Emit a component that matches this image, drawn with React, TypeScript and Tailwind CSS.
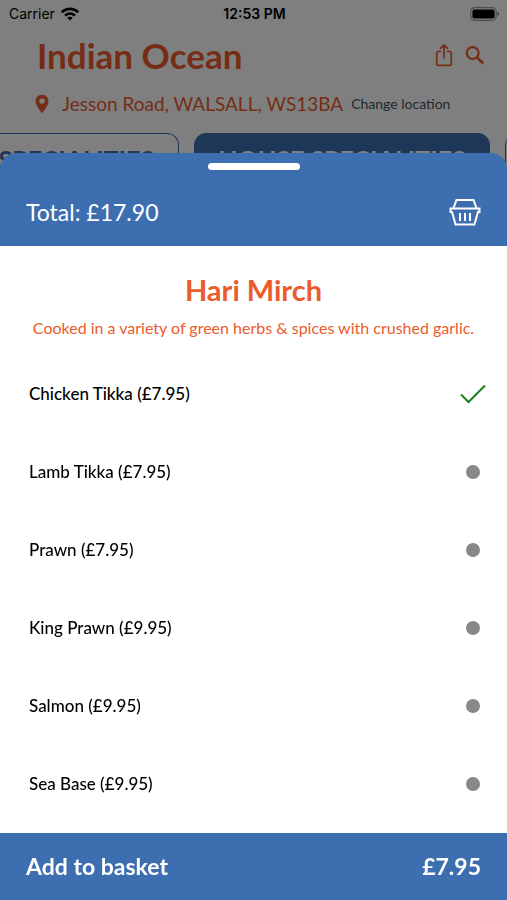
import { useState } from 'react';

interface Option {
  id: string;
  name: string;
  price: string;
}

const OPTIONS: Option[] = [
  { id: 'chicken-tikka', name: 'Chicken Tikka', price: '£7.95' },
  { id: 'lamb-tikka', name: 'Lamb Tikka', price: '£7.95' },
  { id: 'prawn', name: 'Prawn', price: '£7.95' },
  { id: 'king-prawn', name: 'King Prawn', price: '£9.95' },
  { id: 'salmon', name: 'Salmon', price: '£9.95' },
  { id: 'sea-base', name: 'Sea Base', price: '£9.95' },
];

function StatusBar() {
  return (
    <div className="grid h-7 grid-cols-3 items-center pl-[9px] pr-[7px] font-['Inter',sans-serif] text-sm text-black">
      <div className="flex items-center gap-1.5">
        <span>Carrier</span>
        <svg width="18" height="14" viewBox="0 0 18 14" fill="none" stroke="#000" strokeWidth="2.6" aria-hidden="true">
          <path d="M.8 5.200C5.300.8 12.700.8 17.200 5.200" />
          <path d="M4 8.600c2.900-2.700 7.100-2.700 10 0" />
          <path d="M9 13.600 6.200 10.800c1.600-1.400 4-1.400 5.600 0z" fill="#000" stroke="none" />
        </svg>
      </div>
      <span className="text-center font-semibold">12:53 PM</span>
      <svg className="justify-self-end" width="30" height="14" viewBox="0 0 30 14" aria-hidden="true">
        <rect x=".7" y=".7" width="25.600" height="12.600" rx="4" fill="none" stroke="#000" strokeOpacity=".4" strokeWidth="1.200" />
        <rect x="2.400" y="2.400" width="22.200" height="9.200" rx="2" fill="#000" />
        <path d="M27.600 5v4c1-.3 1.600-1.100 1.600-2s-.6-1.700-1.600-2z" fill="#000" fillOpacity=".5" />
      </svg>
    </div>
  );
}

function RestaurantPage() {
  return (
    <div className="text-[#eb5b2b]">
      <StatusBar />
      <header className="flex items-center justify-between pl-[37px] pr-[22px]">
        <h1 className="text-[35px] font-bold leading-[54px]">Indian Ocean</h1>
        <div className="flex items-center gap-3">
          <button type="button" aria-label="Share">
            <svg width="18" height="24" viewBox="0 0 18 24" fill="none" stroke="currentColor" strokeWidth="1.7" strokeLinecap="round" strokeLinejoin="round">
              <path d="M5.500 8.500H3.500A1.800 1.800 0 0 0 1.700 10.300v10.200a1.800 1.800 0 0 0 1.800 1.800h11a1.800 1.800 0 0 0 1.800-1.800V10.300a1.800 1.800 0 0 0-1.800-1.800h-2" />
              <path d="M9 15V2M5.500 5.400 9 1.900l3.500 3.500" />
            </svg>
          </button>
          <button type="button" aria-label="Search">
            <svg width="20" height="20" viewBox="0 0 20 20" fill="none" stroke="currentColor" strokeWidth="2.200">
              <circle cx="7.700" cy="8" r="5.900" />
              <path d="m12.200 12.500 6 6" strokeWidth="2.600" />
            </svg>
          </button>
        </div>
      </header>
      <div className="flex items-center pl-[35px] pt-2">
        <svg width="14" height="20" viewBox="0 0 14 20" fill="currentColor" aria-hidden="true">
          <path fillRule="evenodd" d="M7 .8C3.300.8.500 3.600.500 7.200c0 4.600 6.500 12 6.500 12s6.500-7.400 6.500-12C13.500 3.600 10.700.8 7 .8zm0 3.600a2.700 2.700 0 1 1 0 5.400 2.700 2.700 0 0 1 0-5.400z" />
        </svg>
        <span className="ml-[13px] whitespace-nowrap text-[19px] leading-7">Jesson Road, WALSALL, WS13BA</span>
        <button type="button" className="ml-2 whitespace-nowrap text-sm text-[#41525c]">Change location</button>
      </div>
      <nav className="mt-[15px] flex gap-[15px] overflow-hidden text-[25px] font-bold leading-[50px]">
        <button type="button" className="flex w-[179px] shrink-0 justify-end rounded-r-xl border border-l-0 border-[#3c6eb0] pr-6 text-[#3c6eb0]">
          SPECIALITIES
        </button>
        <button type="button" className="w-[296px] shrink-0 whitespace-nowrap rounded-xl border border-[#3c6eb0] bg-[#3c6eb0] text-white">
          HOUSE SPECIALITIES
        </button>
        <span className="w-12 shrink-0 rounded-xl border border-[#3c6eb0]" />
      </nav>
    </div>
  );
}

function BasketIcon() {
  return (
    <svg width="32" height="28" viewBox="0 0 32 28" fill="none" stroke="currentColor" strokeWidth="2">
      <path d="M4.500 10 7.500 2h17l3 8" />
      <path d="M1.500 10.500h29v3.500H29l-3.600 12.500H6.600L3 14H1.500z" />
      <path d="M11 15v8M16 15v8M21 15v8" />
    </svg>
  );
}

export default function App() {
  const [selected, setSelected] = useState('chicken-tikka');
  const current = OPTIONS.find(o => o.id === selected);

  return (
    <div className="relative min-h-screen overflow-hidden bg-white font-['Lato',sans-serif]">
      <RestaurantPage />

      {/* Bottom sheet over the dimmed restaurant page */}
      <div className="fixed inset-0 flex flex-col bg-black/50 pt-[153px]">
        <section className="flex grow flex-col" aria-label="Hari Mirch">
          <div className="rounded-t-2xl bg-[#3c6eb0] pb-4 pt-[10px] text-white">
            <div className="mx-auto h-[7px] w-[92px] rounded-full bg-white" />
            <div className="flex items-center justify-between px-[26px] pt-6">
              <span className="text-[23px] leading-9">Total: £17.90</span>
              <button type="button" aria-label="Open basket">
                <BasketIcon />
              </button>
            </div>
          </div>

          <div className="bg-white px-5 pt-6 text-center text-[#eb5b2b]">
            <h2 className="text-[29px] font-bold leading-10">Hari Mirch</h2>
            <p className="whitespace-nowrap pt-1 text-base leading-7">
              Cooked in a variety of green herbs &amp; spices with crushed garlic.
            </p>
          </div>

          <fieldset className="grow bg-white pt-[13px] text-black">
            {OPTIONS.map(o => (
              <label key={o.id} className="flex h-[78px] cursor-pointer items-center justify-between pl-[29px] pr-[21px] text-[17px] font-medium">
                <span>{o.name} ({o.price})</span>
                <input
                  type="radio"
                  name="option"
                  className="peer mr-1.5 size-[14px] appearance-none rounded-full bg-[#888888] checked:sr-only"
                  checked={selected === o.id}
                  onChange={() => setSelected(o.id)}
                />
                <svg className="hidden peer-checked:block" width="26" height="20" viewBox="0 0 26 20" fill="none" stroke="#17801f" strokeWidth="2" aria-hidden="true">
                  <path d="m1 10.500 7.500 7.500L25 1.500" />
                </svg>
              </label>
            ))}
          </fieldset>

          <button type="button" className="flex h-[67px] items-center justify-between bg-[#3c6eb0] px-[26px] text-[23px] font-bold text-white">
            <span>Add to basket</span>
            <span>{current?.price}</span>
          </button>
        </section>
      </div>
    </div>
  );
}
